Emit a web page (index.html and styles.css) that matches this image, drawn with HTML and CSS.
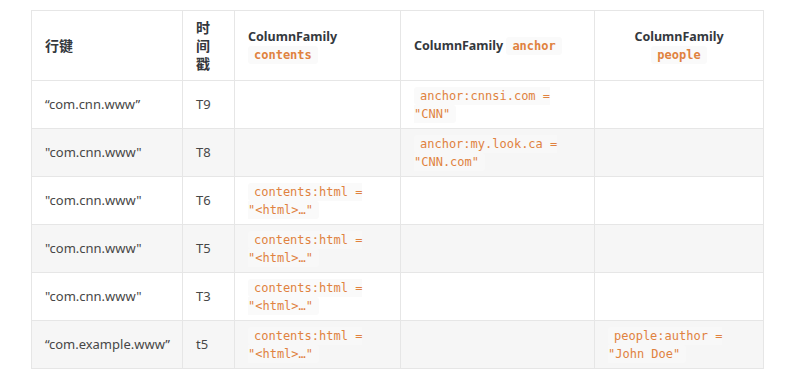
FILE: index.html
```html
<!DOCTYPE html>
<html lang="zh-CN">
<head>
    <meta charset="UTF-8">
    <meta name="viewport" content="width=device-width, initial-scale=1.0">
    <title>HBase 表</title>
    <link rel="stylesheet" href="styles.css">
</head>
<body>
<div class="wrap">
    <table class="hbase">
        <colgroup>
            <col class="c-key">
            <col class="c-ts">
            <col class="c-contents">
            <col class="c-anchor">
            <col class="c-people">
        </colgroup>
        <thead>
            <tr>
                <th class="cjk">行键</th>
                <th class="cjk">时间戳</th>
                <th>ColumnFamily <code>contents</code></th>
                <th>ColumnFamily <code>anchor</code></th>
                <th class="center">ColumnFamily <code>people</code></th>
            </tr>
        </thead>
        <tbody>
            <tr>
                <td>“com.cnn.www”</td>
                <td>T9</td>
                <td></td>
                <td><code>anchor:cnnsi.com = "CNN"</code></td>
                <td></td>
            </tr>
            <tr>
                <td>"com.cnn.www"</td>
                <td>T8</td>
                <td></td>
                <td><code>anchor:my.look.ca = "CNN.com"</code></td>
                <td></td>
            </tr>
            <tr>
                <td>"com.cnn.www"</td>
                <td>T6</td>
                <td><code>contents:html = <span class="nw">"&lt;html&gt;…"</span></code></td>
                <td></td>
                <td></td>
            </tr>
            <tr>
                <td>"com.cnn.www"</td>
                <td>T5</td>
                <td><code>contents:html = <span class="nw">"&lt;html&gt;…"</span></code></td>
                <td></td>
                <td></td>
            </tr>
            <tr>
                <td>"com.cnn.www"</td>
                <td>T3</td>
                <td><code>contents:html = <span class="nw">"&lt;html&gt;…"</span></code></td>
                <td></td>
                <td></td>
            </tr>
            <tr>
                <td>“com.example.www”</td>
                <td>t5</td>
                <td><code>contents:html = <span class="nw">"&lt;html&gt;…"</span></code></td>
                <td></td>
                <td><code>people:author = "John Doe"</code></td>
            </tr>
        </tbody>
    </table>
</div>
</body>
</html>
```

FILE: styles.css
```css
body {
    margin: 0;
    background: #ffffff;
    font-family: "Noto Sans", "Noto Sans CJK SC", sans-serif;
    color: #474747;
}

.wrap {
    padding: 10px 31px 0 31px;
}

.hbase {
    border-collapse: collapse;
    table-layout: fixed;
    width: 732px;
    font-size: 13px;
    line-height: 18px;
}

.c-key { width: 151px; }
.c-ts { width: 52px; }
.c-contents { width: 166px; }
.c-anchor { width: 194px; }
.c-people { width: 169px; }

.hbase th,
.hbase td {
    border: 1px solid #e6e6e6;
    padding: 5px 13px 6px 13px;
    text-align: left;
    vertical-align: middle;
}

.hbase th {
    padding: 8px 13px 7px 13px;
    font-size: 12.5px;
    font-weight: 700;
    color: #34383d;
}

.hbase th.cjk {
    font-size: 14px;
}

.hbase th.center {
    text-align: center;
}

.hbase tbody tr:nth-child(even) {
    background: #f6f6f6;
}

code {
    font-family: "DejaVu Sans Mono", "Liberation Mono", monospace;
    font-size: 12px;
    line-height: 1;
    color: #e0823f;
    background: #fafafa;
    padding: 2px 6px;
    border-radius: 3px;
}

tbody tr:nth-child(even) code {
    background: #f8f8f8;
}

.nw {
    white-space: nowrap;
}
```
